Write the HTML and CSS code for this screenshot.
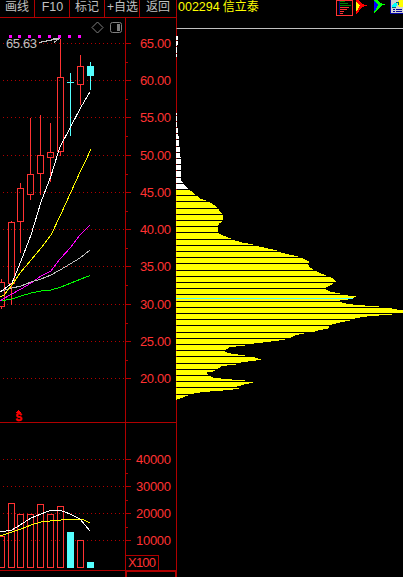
FILE: index.html
```html
<!DOCTYPE html>
<html lang="zh-CN">
<head>
    <meta charset="UTF-8">
    <meta name="viewport" content="width=device-width, initial-scale=1.0">
    <title>002294 信立泰</title>
    <link rel="stylesheet" href="styles.css">
</head>
<body>
    <div class="terminal">
        <div class="kline">
            <div class="toolbar">
                <span>画线</span>
                <span class="latin">F10</span>
                <span>标记</span>
                <span class="wide">+自选</span>
                <span>返回</span>
            </div>
            <svg class="price-chart" viewBox="0 18 176 405">
                <g id="price-grid"></g>
                <path class="axis" d="M125.5 18V423M0 422.5H176"/>
                <g id="candles"></g>
                <polyline class="ma green" points="0,301 12,299 21,296 31,293 41,291 51,290 61,287 71,283 81,279 90,275.5"/>
                <polyline class="ma magenta" points="0,301 3,299 12,294 21,289 31,283 41,276 51,271 60,259 71,247 80,235 90,225"/>
                <polyline class="ma gray" points="0,291.5 12,288 21,286 31,282 41,279 51,275 60,270 70,264 80,258 90,250"/>
                <polyline class="ma yellow" points="0,297 4,295 12,285 20,273 31,260 41,248 51,235 61,214 71,192 81,170 86,160 91,149"/>
                <polyline class="ma white" points="0,292 3,290 12,283 21,261 31,235 41,202 51,176 53,169 60,147 70,128 81,107 90,92"/>
                <g id="marks"></g>
                <text class="high" x="6" y="48" textLength="31">65.63</text>
                <path class="arrow" d="M39 42.5L59 38.5M53 38.5L59 38.5L54 42.5"/>
                <path class="tool" d="M97.5 22L103 27.5L97.5 33L92 27.5Z"/>
                <rect class="tool" x="110.5" y="22.5" width="11" height="10" rx="2"/>
                <rect class="tool-fill" x="117" y="24" width="3" height="7"/>
                <path class="flag" d="M16 413V412H17V411H18V410H19V411H20V412H21V413Z"/>
                <text class="flag-text" x="15.5" y="421">S</text>
            </svg>
            <svg class="volume-chart" viewBox="0 423 176 154">
                <g id="volume-grid"></g>
                <path class="axis" d="M125.5 423V577M0 570.5H176M125 555.5H158.5V570"/>
                <path class="axis" d="M125 571.5H176M126.5 571V577M175.5 571V577"/>
                <g id="volumes"></g>
                <polyline class="ma yellow" points="0,536 12,532 21,529 31,525 41,522 50,521 67,519.5 82,519 90,523"/>
                <polyline class="ma white" points="0,532 12,530 20,525 31,518 41,514 50,510.5 61,510.5 70,514 80,519 90,531"/>
                <text class="label" x="128" y="567" textLength="28">X100</text>
            </svg>
        </div>
        <div class="chips">
            <div class="chips-head">
                <span class="stock"><b>002294</b>信立泰</span>
                <svg class="icons" viewBox="336 0 67 16">
                    <path class="icon-box" d="M336.5 0V15.5H352.5V0M336 .5H353"/>
                    <path stroke="#008000" d="M340 1.5H345M340 3.5H348M340 5.5H351M340 7.5H342"/>
                    <path stroke="#ff3232" d="M340 7.5H349M340 9.5H347M340 11.5H344M340 13.5H343"/>
                    <path stroke="#000080" d="M339.5 1V14"/>
                    <path fill="#ff0000" d="M356 0H359L362 4L367 5.5L362 7L357 14H356V11L359 7L356 2Z"/>
                    <path fill="#ffff00" d="M356 2L360 5.5L356 12Z"/>
                    <path fill="#00ff00" d="M374 0H377L381 3L385 4.5L381 6L375 13H374V10L378 5L374 1Z"/>
                    <path fill="#0000ff" d="M374 1H375L378 5L375 11H374Z"/>
                    <rect x="390" y="0" width="13" height="14" fill="#0000a0"/>
                    <rect x="391" y="0" width="12" height="13" fill="#d0d0d0"/>
                    <circle cx="401" cy="3.5" r="3.5" fill="#ffff00"/>
                    <path fill="#00ffff" d="M392 7V5L394 3H397V5L395 7Z"/>
                    <path fill="none" stroke="#006080" d="M392 7.5H396M396 2.5H398V5"/>
                    <path stroke="#0000a0" d="M393 9.5H395M396 9.5H402M393 11.5H395M396 11.5H402"/>
                </svg>
            </div>
            <svg class="profile" viewBox="176 29 227 548">
                <path class="axis" d="M176.5 29V577"/>
                <g id="profile"></g>
            </svg>
        </div>
    </div>

    <script>
        const NS = 'http://www.w3.org/2000/svg';

        function add(parent, tag, attrs, text) {
            const el = document.createElementNS(NS, tag);
            for (const key in attrs) el.setAttribute(key, attrs[key]);
            if (text) el.textContent = text;
            document.getElementById(parent).appendChild(el);
        }

        function grid(parent, rows, minor) {
            rows.forEach(function([y, label]) {
                add(parent, 'path', { class: 'dots', d: `M3 ${y + 0.5}H125` });
                add(parent, 'path', { class: 'axis', d: `M126 ${y + 0.5}H131` });
                const len = label.includes('.') ? 31 : 35;
                add(parent, 'text', { class: 'label', x: 171 - len, y: y + 5, textLength: len }, label);
            });
            minor.forEach(y => add(parent, 'path', { class: 'axis', d: `M126 ${y + 0.5}H128` }));
        }

        grid('price-grid', [
            [43, '65.00'], [80, '60.00'], [117, '55.00'], [155, '50.00'], [192, '45.00'],
            [229, '40.00'], [266, '35.00'], [304, '30.00'], [341, '25.00'], [378, '20.00']
        ], [62, 99, 136, 174, 211, 248, 285, 323, 360]);
        grid('volume-grid', [
            [459, '40000'], [486, '30000'], [513, '20000'], [540, '10000']
        ], [473, 500, 527]);

        // centre x, high, body top, body bottom, low, falling
        const candles = [
            [1, 279, 282, 307, 309], [11, 221, 222, 284, 305], [20, 183, 188, 222, 253],
            [30, 118, 174, 195, 200], [40, 115, 155, 174, 195], [50, 123, 152, 158, 182],
            [60, 39, 77, 152, 156], [70, 73, 82, 83, 136, 1], [80, 55, 66, 85, 105],
            [90, 62, 66, 76, 90, 1]
        ];
        candles.forEach(function([x, high, top, bottom, low, down]) {
            const cls = down ? 'down' : 'up';
            add('candles', 'path', { class: cls, d: `M${x + 0.5} ${high}V${top}M${x + 0.5} ${bottom}V${low}` });
            add('candles', 'rect', down
                ? { class: 'down-fill', x: x - 3, y: top, width: 7, height: bottom - top }
                : { class: 'up', x: x - 2.5, y: top + 0.5, width: 6, height: bottom - top - 1 });
        });

        const volumes = [
            [1, 536], [11, 503], [20, 514], [30, 514], [40, 504], [50, 514],
            [60, 506], [70, 532, 1], [80, 540], [90, 562, 1]
        ];
        volumes.forEach(function([x, y, down]) {
            add('volumes', 'rect', down
                ? { class: 'down-fill', x: x - 3, y: y, width: 7, height: 568 - y }
                : { class: 'up', x: x - 2.5, y: y + 0.5, width: 6, height: 567 - y });
        });

        [9, 18, 28, 38, 48, 58, 68, 78].forEach(x =>
            add('marks', 'rect', { class: 'mark', x: x, y: 35, width: 3, height: 3 }));

        // chip distribution outline: y, width
        const outline = [
            [36, 2], [44, 2], [45, 1], [56, 1], [57, 0], [112, 0], [113, 1], [127, 1], [128, 2],
            [135, 2], [136, 3], [145, 3], [146, 4], [156, 4], [157, 5], [180, 5], [182, 7],
            [185, 9], [188, 12], [190, 14], [192, 17], [194, 19], [196, 22], [198, 24],
            [200, 30], [202, 34], [204, 37], [206, 40], [208, 42], [211, 44], [213, 46],
            [215, 47], [218, 47], [220, 46], [222, 45], [223, 43], [225, 42], [231, 42],
            [233, 43], [235, 47], [237, 52], [238, 55], [240, 59], [242, 66], [244, 77],
            [246, 83], [248, 92], [250, 101], [252, 105], [254, 113], [256, 122], [258, 127],
            [260, 131], [261, 133], [263, 132], [266, 133], [269, 137], [271, 141],
            [273, 145], [275, 150], [277, 155], [279, 158], [281, 160], [283, 157],
            [285, 154], [287, 150], [289, 150], [291, 154], [293, 164], [295, 172],
            [296, 180], [297, 178], [298, 177], [299, 172], [300, 164], [302, 166],
            [303, 170], [304, 177], [305, 189], [306, 203], [308, 216], [309, 221],
            [310, 227], [312, 227], [314, 216], [315, 203], [316, 191], [317, 184],
            [318, 179], [320, 174], [322, 164], [324, 156], [326, 153], [328, 152],
            [330, 142], [332, 136], [333, 128], [334, 123], [335, 119], [337, 115],
            [339, 109], [340, 103], [341, 95], [342, 87], [343, 78], [345, 69], [346, 60],
            [347, 53], [349, 50], [350, 49], [351, 49], [352, 51], [353, 55], [354, 62],
            [355, 69], [357, 79], [358, 82], [359, 85], [360, 80], [361, 72], [362, 65],
            [364, 60], [365, 51], [366, 45], [368, 42], [370, 39], [371, 37], [372, 31],
            [375, 32], [377, 37], [378, 45], [379, 56], [380, 69], [382, 77], [383, 73],
            [384, 68], [386, 61], [388, 63], [389, 57], [390, 47], [391, 34], [392, 24],
            [393, 18], [395, 12], [396, 9], [397, 7], [398, 4], [399, 1], [400, 0]
        ];
        const gaps = new Set();
        for (let k = -34; k < 27; k++) gaps.add(Math.floor(239 + k * 6.2 + 0.01));

        for (let i = 0; i < outline.length - 1; i++) {
            const [y0, w0] = outline[i];
            const [y1, w1] = outline[i + 1];
            for (let y = y0; y < y1; y++) {
                const width = Math.round(w0 + (w1 - w0) * (y - y0) / (y1 - y0));
                if (!width) continue;
                if (gaps.has(y)) continue;
                const cls = y === 298 ? 'avg' : y < 189 ? 'trapped' : 'profit';
                add('profile', 'rect', { class: cls, x: 176, y: y, width: width, height: 1 });
            }
        }
    </script>
</body>
</html>
```
FILE: styles.css
```css
body {
    margin: 0;
    background-color: #000;
    color: #c0c0c0;
    font-family: "Liberation Sans", "Noto Sans CJK SC", sans-serif;
    font-size: 12px;
    overflow: hidden;
}
svg {
    display: block;
    shape-rendering: crispEdges;
}
.terminal {
    display: flex;
    width: 403px;
    height: 577px;
}
.kline {
    width: 176px;
}
.toolbar {
    display: flex;
    height: 17px;
    border-bottom: 1px solid #b00000;
}
.toolbar span {
    box-sizing: border-box;
    width: 35px;
    border-right: 1px solid #b00000;
    text-align: center;
    line-height: 15px;
    white-space: nowrap;
}
.toolbar span:last-child {
    width: 36px;
    border-right: none;
}
.toolbar .latin {
    padding-left: 1px;
    font-size: 12.5px;
    line-height: 15px;
}
.toolbar .wide {
    padding-left: 1px;
}
.price-chart {
    width: 176px;
    height: 405px;
}
.volume-chart {
    width: 176px;
    height: 154px;
}
.axis {
    fill: none;
    stroke: #b00000;
}
.dots {
    stroke: #b00000;
    stroke-dasharray: 1 3;
}
.label {
    fill: #ff3232;
    font-size: 13px;
}
.high {
    fill: #c0c0c0;
    font-size: 13px;
}
.arrow {
    fill: none;
    stroke: #c0c0c0;
}
.up {
    fill: none;
    stroke: #ff3232;
}
.down {
    stroke: #54ffff;
}
.down-fill {
    fill: #54ffff;
}
.ma {
    fill: none;
    stroke-width: 1;
}
.white { stroke: #fff; }
.yellow { stroke: #ff0; }
.magenta { stroke: #f0f; }
.gray { stroke: #c0c0c0; }
.green { stroke: #0f0; }
.mark {
    fill: #f0f;
}
.tool {
    fill: none;
    stroke: #808080;
    shape-rendering: auto;
}
.tool-fill {
    fill: #808080;
}
.flag {
    fill: #f00;
}
.flag-text {
    fill: #f00;
    stroke: #f00;
    stroke-width: 0.4;
    font-size: 10px;
    font-weight: bold;
}
.chips {
    width: 227px;
}
.chips-head {
    display: flex;
    justify-content: space-between;
    height: 28px;
    padding-left: 1px;
    border-left: 1px solid #b00000;
    border-bottom: 1px solid #c0c0c0;
}
.stock {
    color: #ff0;
    line-height: 14px;
}
.stock b {
    margin-right: 3px;
    font-size: 12.5px;
    font-weight: normal;
}
.icons {
    width: 67px;
    height: 16px;
}
.icon-box {
    fill: none;
    stroke: #ff3232;
}
.profile {
    width: 227px;
    height: 548px;
}
.trapped {
    fill: #fff;
}
.profit {
    fill: #ff0;
}
.avg {
    fill: #54ffff;
}
```
